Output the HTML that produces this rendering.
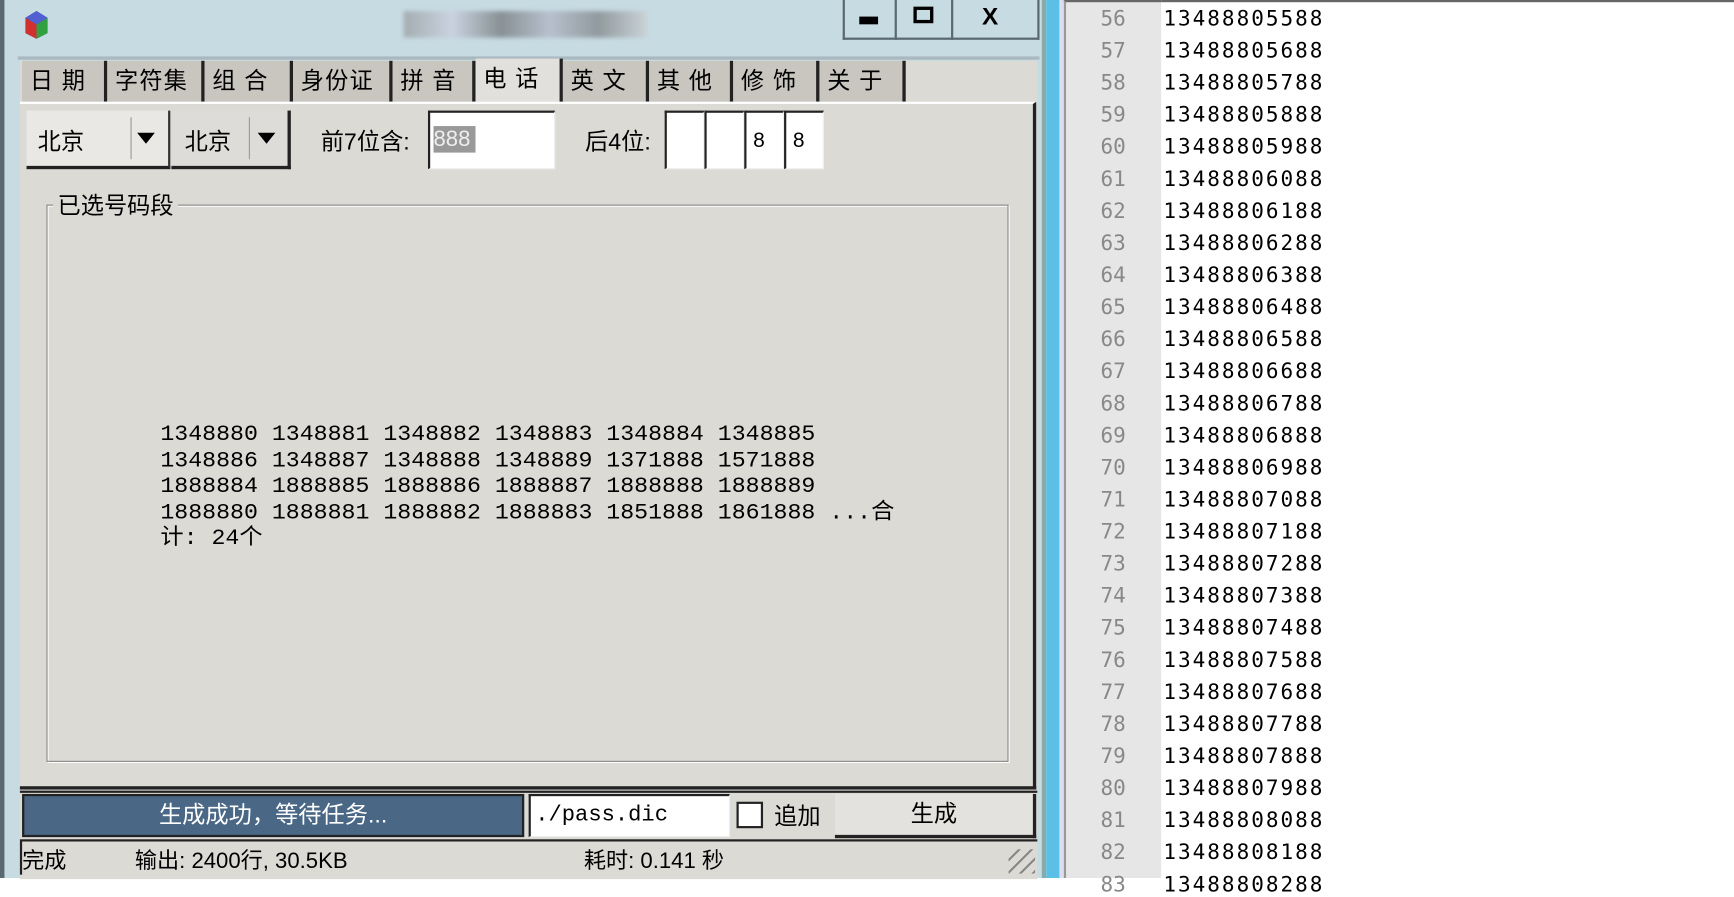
<!DOCTYPE html>
<html><head><meta charset="utf-8"><style>
*{margin:0;padding:0;box-sizing:border-box}
html,body{width:1734px;height:878px;overflow:hidden;background:#fff}
#s{position:absolute;left:0;top:0;width:1568px;height:794px;transform:scale(1.10587,1.1058);transform-origin:0 0;font-family:"Liberation Sans","Noto Sans CJK SC",sans-serif;color:#000}
.a{position:absolute}
.cj{font-family:"Liberation Sans","Noto Sans CJK SC",sans-serif;font-size:21px}
.tab{position:absolute;top:55px;height:37px;background:#c9c6c0;border-right:3px solid #222;font-size:21px;line-height:37px;padding-left:7px;letter-spacing:1px}
.box{position:absolute;background:#fff;border-top:2px solid #222;border-left:2px solid #222;border-right:1px solid #eee;border-bottom:1px solid #eee}
.mono{font-family:"Liberation Mono","DejaVu Sans Mono",monospace}
.ln{position:absolute;left:962px;width:56px;text-align:right;color:#888;font-size:19px;font-family:"DejaVu Sans Mono",monospace;margin-top:2px}
.tx{position:absolute;left:1052px;font-size:19px;font-family:"DejaVu Sans Mono",monospace;letter-spacing:1.8px;margin-top:2px}
</style></head><body><div id="s">
<div class="a" style="left:0;top:0;width:942px;height:794px;background:#c7dbe3"></div>
<div class="a" style="left:0;top:0;width:4px;height:794px;background:#5a6870"></div>
<div class="a" style="left:22px;top:8px;width:22px;height:28px">
<svg width="22" height="28"><polygon points="11,2 21,8 21,22 11,27 1,22 1,8" fill="#3a4ab0"/><polygon points="1,8 11,14 11,27 1,22" fill="#d03030"/><polygon points="11,14 21,8 21,22 11,27" fill="#30a040"/><polygon points="11,2 21,8 11,14 1,8" fill="#5060d0"/></svg></div>
<div class="a" style="left:365px;top:10px;width:220px;height:24px;background:linear-gradient(90deg,#888,#ccd,#555,#aab,#666,#ccc);opacity:.55;filter:blur(2px)"></div>
<div class="a" style="left:762px;top:0;width:178px;height:36px;border:2px solid #5a6870;border-top:0;background:#c7dbe3"></div>
<div class="a" style="left:809px;top:0;width:2px;height:36px;background:#5a6870"></div>
<div class="a" style="left:860px;top:0;width:2px;height:36px;background:#5a6870"></div>
<div class="a" style="left:777px;top:15px;width:17px;height:7px;background:#000"></div>
<div class="a" style="left:826px;top:6px;width:18px;height:15px;border:3px solid #000"></div>
<div class="a" style="left:888px;top:2px;font-size:22px;font-weight:bold">X</div>
<div class="a" style="left:16px;top:51px;width:924px;height:3px;background:#aab8c0"></div>
<div class="a" style="left:18px;top:55px;width:920px;height:740px;background:#dcdad5"></div>
<div class="tab" style="left:20px;width:77px">日 期</div>
<div class="tab" style="left:97px;width:88px">字符集</div>
<div class="tab" style="left:185px;width:80px">组 合</div>
<div class="tab" style="left:265px;width:90px">身份证</div>
<div class="tab" style="left:355px;width:75px">拼 音</div>
<div class="tab" style="left:430px;width:79px;background:#e2e0dc;top:53px;height:40px">电 话</div>
<div class="tab" style="left:509px;width:78px">英 文</div>
<div class="tab" style="left:587px;width:76px">其 他</div>
<div class="tab" style="left:663px;width:78px">修 饰</div>
<div class="tab" style="left:741px;width:78px">关 于</div>
<div class="a" style="left:18px;top:92px;width:919px;height:622px;background:#dcdad5;border-top:2px solid #fff;border-right:3px solid #222;border-bottom:3px solid #222"></div>
<div class="a" style="left:24px;top:100px;width:130px;height:53px;background:#eae8e4;border-bottom:3px solid #222;border-right:2px solid #333"></div>
<div class="a cj" style="left:34px;top:112px">北京</div>
<div class="a" style="left:118px;top:106px;width:1px;height:38px;background:#999"></div>
<div class="a" style="left:124px;top:120px;width:0;height:0;border-left:8px solid transparent;border-right:8px solid transparent;border-top:10px solid #000"></div>
<div class="a" style="left:155px;top:100px;width:108px;height:53px;background:#dedcd8;border-bottom:3px solid #222;border-right:3px solid #222"></div>
<div class="a cj" style="left:167px;top:112px">北京</div>
<div class="a" style="left:225px;top:106px;width:1px;height:38px;background:#999"></div>
<div class="a" style="left:233px;top:120px;width:0;height:0;border-left:8px solid transparent;border-right:8px solid transparent;border-top:10px solid #000"></div>
<div class="a cj" style="left:290px;top:112px">前7位含:</div>
<div class="box" style="left:387px;top:100px;width:115px;height:53px"></div>
<div class="a" style="left:392px;top:114px;width:38px;height:24px;background:#999;color:#eee;font-size:20px;line-height:24px">888</div>
<div class="a cj" style="left:529px;top:112px">后4位:</div>
<div class="box" style="left:601px;top:100px;width:36px;height:53px"></div>
<div class="box" style="left:637px;top:100px;width:36px;height:53px"></div>
<div class="box" style="left:673px;top:100px;width:36px;height:53px;font-size:19px;padding:15px 0 0 6px">8</div>
<div class="box" style="left:709px;top:100px;width:36px;height:53px;font-size:19px;padding:15px 0 0 6px">8</div>
<div class="a" style="left:42px;top:185px;width:870px;height:504px;border:1px solid #888;box-shadow:1px 1px 0 #fff inset,1px 1px 0 #fff"></div>
<div class="a cj" style="left:48px;top:170px;background:#dcdad5;padding:0 4px">已选号码段</div>
<div class="a mono" style="left:145px;top:382px;font-size:20px;line-height:23.6px;white-space:pre;font-family:'Liberation Mono','Noto Sans CJK SC',monospace;transform:scaleX(1.05);transform-origin:0 0">1348880 1348881 1348882 1348883 1348884 1348885
1348886 1348887 1348888 1348889 1371888 1571888
1888884 1888885 1888886 1888887 1888888 1888889
1888880 1888881 1888882 1888883 1851888 1861888 ...合
计: 24个</div>
<div class="a" style="left:18px;top:715px;width:920px;height:2px;background:#222"></div>
<div class="a" style="left:20px;top:718px;width:454px;height:39px;background:#4a6886;border:2px solid #222;color:#fff;text-align:center;font-size:21px;line-height:35px">生成成功，等待任务...</div>
<div class="box" style="left:478px;top:718px;width:182px;height:39px;font-size:20px;padding:6px 0 0 4px;font-family:'Liberation Mono',monospace">./pass.dic</div>
<div class="a" style="left:666px;top:725px;width:24px;height:24px;border:2px solid #222;background:#fff"></div>
<div class="a cj" style="left:700px;top:722px">追加</div>
<div class="a" style="left:755px;top:718px;width:182px;height:40px;background:#e4e2de;border-right:3px solid #222;border-bottom:3px solid #222;text-align:center;font-size:21px;line-height:37px">生成</div>
<div class="a" style="left:18px;top:759px;width:920px;height:2px;background:#222"></div>
<div class="a" style="left:18px;top:761px;width:2px;height:30px;background:#222"></div>
<div class="a cj" style="left:20px;top:762px;font-size:20px">完成</div>
<div class="a cj" style="left:122px;top:762px;font-size:20px">输出: 2400行, 30.5KB</div>
<div class="a cj" style="left:528px;top:762px;font-size:20px">耗时: 0.141 秒</div>
<div class="a" style="left:912px;top:768px;width:24px;height:22px;background:repeating-linear-gradient(135deg,transparent 0 6px,#888 6px 8px)"></div>
<div class="a" style="left:942px;top:0;width:4px;height:794px;background:#8aa"></div>
<div class="a" style="left:946px;top:0;width:12px;height:794px;background:#5cc0e6"></div>
<div class="a" style="left:958px;top:0;width:4px;height:794px;background:#dde"></div>
<div class="a" style="left:962px;top:0;width:88px;height:794px;background:#e6e6e6;border-left:2px solid #999;border-top:2px solid #666"></div>
<div class="a" style="left:1050px;top:0;width:518px;height:2px;background:#666"></div>
<div class="ln" style="top:4px">56</div><div class="tx" style="top:4px">13488805588</div>
<div class="ln" style="top:33px">57</div><div class="tx" style="top:33px">13488805688</div>
<div class="ln" style="top:62px">58</div><div class="tx" style="top:62px">13488805788</div>
<div class="ln" style="top:91px">59</div><div class="tx" style="top:91px">13488805888</div>
<div class="ln" style="top:120px">60</div><div class="tx" style="top:120px">13488805988</div>
<div class="ln" style="top:149px">61</div><div class="tx" style="top:149px">13488806088</div>
<div class="ln" style="top:178px">62</div><div class="tx" style="top:178px">13488806188</div>
<div class="ln" style="top:207px">63</div><div class="tx" style="top:207px">13488806288</div>
<div class="ln" style="top:236px">64</div><div class="tx" style="top:236px">13488806388</div>
<div class="ln" style="top:265px">65</div><div class="tx" style="top:265px">13488806488</div>
<div class="ln" style="top:294px">66</div><div class="tx" style="top:294px">13488806588</div>
<div class="ln" style="top:323px">67</div><div class="tx" style="top:323px">13488806688</div>
<div class="ln" style="top:352px">68</div><div class="tx" style="top:352px">13488806788</div>
<div class="ln" style="top:381px">69</div><div class="tx" style="top:381px">13488806888</div>
<div class="ln" style="top:410px">70</div><div class="tx" style="top:410px">13488806988</div>
<div class="ln" style="top:439px">71</div><div class="tx" style="top:439px">13488807088</div>
<div class="ln" style="top:468px">72</div><div class="tx" style="top:468px">13488807188</div>
<div class="ln" style="top:497px">73</div><div class="tx" style="top:497px">13488807288</div>
<div class="ln" style="top:526px">74</div><div class="tx" style="top:526px">13488807388</div>
<div class="ln" style="top:555px">75</div><div class="tx" style="top:555px">13488807488</div>
<div class="ln" style="top:584px">76</div><div class="tx" style="top:584px">13488807588</div>
<div class="ln" style="top:613px">77</div><div class="tx" style="top:613px">13488807688</div>
<div class="ln" style="top:642px">78</div><div class="tx" style="top:642px">13488807788</div>
<div class="ln" style="top:671px">79</div><div class="tx" style="top:671px">13488807888</div>
<div class="ln" style="top:700px">80</div><div class="tx" style="top:700px">13488807988</div>
<div class="ln" style="top:729px">81</div><div class="tx" style="top:729px">13488808088</div>
<div class="ln" style="top:758px">82</div><div class="tx" style="top:758px">13488808188</div>
<div class="ln" style="top:787px">83</div><div class="tx" style="top:787px">13488808288</div>
</div></body></html>
